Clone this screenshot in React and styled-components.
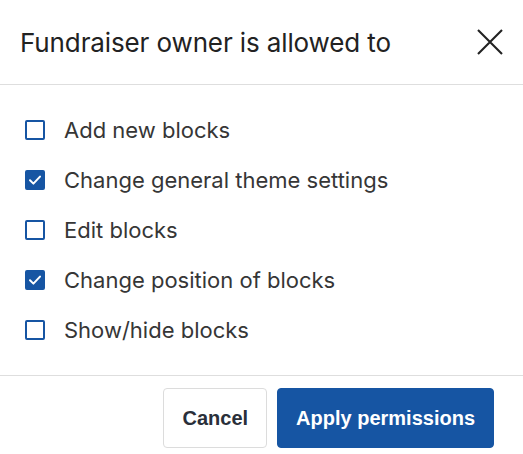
import styled, { createGlobalStyle } from "styled-components";

const GlobalStyle = createGlobalStyle`
	html, body {
		margin: 0;
		padding: 0;
		background: #fff;
	}
	body {
		font-family: Inter, "Noto Sans", sans-serif;
	}
`;

const Modal = styled.div`
	width: 523px;
	height: 454px;
	overflow: hidden;
	background: #fff;
	display: flex;
	flex-direction: column;
`;

const Header = styled.div`
	height: 85px;
	flex-shrink: 0;
	display: flex;
	align-items: center;
	justify-content: space-between;
	padding: 0 19px 0 20px;
	border-bottom: 1px solid #dedede;
	box-sizing: border-box;
`;

const Title = styled.h2`
	margin: 0;
	font-size: 26px;
	font-weight: 400;
	letter-spacing: -0.12px;
	color: #222;
`;

const CloseButton = styled.button`
	border: none;
	background: none;
	padding: 0;
	width: 28px;
	height: 28px;
	display: flex;
	align-items: center;
	justify-content: center;
	cursor: pointer;
`;

const Body = styled.div`
	padding: 20px 25px 20px;
	display: flex;
	flex-direction: column;
`;

const Row = styled.label`
	height: 50px;
	display: flex;
	align-items: center;
	gap: 19px;
	cursor: pointer;
`;

const Box = styled.span`
	width: 20px;
	height: 20px;
	box-sizing: border-box;
	border-radius: 2px;
	border: 2px solid #1655a3;
	background: ${(p) => (p.checked ? "#1655a3" : "#fff")};
	display: flex;
	align-items: center;
	justify-content: center;
	flex-shrink: 0;
`;

const Label = styled.span`
	font-size: 22px;
	color: #363636;
`;

const Footer = styled.div`
	border-top: 1px solid #dedede;
	padding: 12px 29px 0 0;
	display: flex;
	justify-content: flex-end;
	gap: 10px;
`;

const Button = styled.button`
	height: 60px;
	padding: 0 18px;
	border-radius: 4px;
	font-family: "Liberation Sans", Arial, sans-serif;
	font-weight: 700;
	font-size: 20px;
	cursor: pointer;
	border: 1px solid ${(p) => (p.primary ? "#1655a3" : "#dcdcdc")};
	background: ${(p) => (p.primary ? "#1655a3" : "#fff")};
	color: ${(p) => (p.primary ? "#fff" : "#2a2f3a")};
`;

const permissions = [
	{ label: "Add new blocks", checked: false },
	{ label: "Change general theme settings", checked: true },
	{ label: "Edit blocks", checked: false },
	{ label: "Change position of blocks", checked: true },
	{ label: "Show/hide blocks", checked: false },
];

function Checkbox({ checked }) {
	return (
		<Box checked={checked}>
			{checked && (
				<svg width="14" height="14" viewBox="0 0 14 14" fill="none">
					<path
						d="M2 7.3 L5.4 10.6 L12 3.6"
						stroke="#fff"
						strokeWidth="2"
						strokeLinecap="round"
						strokeLinejoin="round"
					/>
				</svg>
			)}
		</Box>
	);
}

export default function App() {
	return (
		<>
			<GlobalStyle />
			<Modal>
				<Header>
					<Title>Fundraiser owner is allowed to</Title>
					<CloseButton aria-label='Close'>
						<svg width="28" height="28" viewBox="0 0 28 28" fill="none">
							<path d="M2 2 L26 26 M26 2 L2 26" stroke="#222" strokeWidth="2.1" />
						</svg>
					</CloseButton>
				</Header>
				<Body>
					{permissions.map((item, i) => (
						<Row key={`perm${i}`}>
							<Checkbox checked={item.checked} />
							<Label>{item.label}</Label>
						</Row>
					))}
				</Body>
				<Footer>
					<Button>Cancel</Button>
					<Button primary>Apply permissions</Button>
				</Footer>
			</Modal>
		</>
	);
}
